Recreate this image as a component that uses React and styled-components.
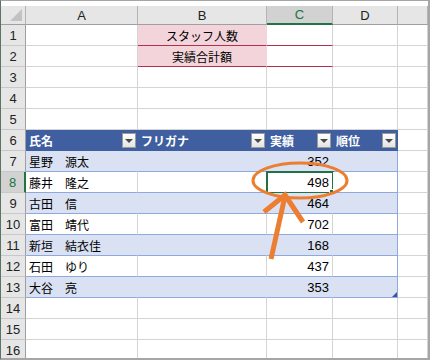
import React from 'react';
import styled, { createGlobalStyle, css } from 'styled-components';

const GRID = '#d4d4d4';
const HEAD_BG = '#e6e6e6';
const HEAD_LINE = '#b4b4b4';
const ACTIVE = '#217346';
const TABLE_HEAD = '#3f5fa0';
const BAND = '#d9e1f2';
const TABLE_LINE = '#8ea9db';
const PINK = '#f2d4da';
const MAROON = '#b0304f';
const ORANGE = '#ed7d31';

const GlobalStyle = createGlobalStyle`
  html, body {
    margin: 0;
    padding: 0;
    background: #ffffff;
  }
  body {
    font-family: "Liberation Sans", "Noto Sans CJK JP", sans-serif;
  }
`;

const Stage = styled.div`
  position: relative;
  width: 430px;
  height: 360px;
  overflow: hidden;
`;

const Frame = styled.div`
  box-sizing: border-box;
  width: 430px;
  height: 360px;
  padding-top: 5px;
  border-top: 1px solid #a6a6a6;
  border-left: 1px solid #5b7565;
  border-right: 2px solid #a6a6a6;
  border-bottom: 2px solid #a6a6a6;
  overflow: hidden;
  background: #ffffff;
`;

const Sheet = styled.div`
  display: grid;
  grid-template-columns: 25px 112px 129px 66px 65px 30px;
  grid-template-rows: 19px;
  grid-auto-rows: 21px;
`;

const Corner = styled.div`
  position: relative;
  background: ${HEAD_BG};
  border-right: 1px solid ${HEAD_LINE};
  border-bottom: 1px solid #9f9f9f;
  box-sizing: border-box;

  &::after {
    content: '';
    position: absolute;
    right: 3px;
    bottom: 3px;
    width: 0;
    height: 0;
    border-left: 12px solid transparent;
    border-bottom: 12px solid #c2c2c2;
  }
`;

const ColHead = styled.div`
  box-sizing: border-box;
  display: flex;
  align-items: center;
  justify-content: center;
  background: ${HEAD_BG};
  border-right: 1px solid ${HEAD_LINE};
  border-bottom: 1px solid #9f9f9f;
  font-size: 13px;
  color: #222;

  ${p =>
    p.$active &&
    css`
      background: #d2d2d2;
      color: ${ACTIVE};
      border-bottom: 2px solid ${ACTIVE};
    `}
`;

const RowHead = styled.div`
  box-sizing: border-box;
  display: flex;
  align-items: center;
  justify-content: center;
  background: ${HEAD_BG};
  border-right: 1px solid #9f9f9f;
  border-bottom: 1px solid #c8c8c8;
  font-size: 13px;
  color: #222;

  ${p =>
    p.$active &&
    css`
      background: #d2d2d2;
      color: ${ACTIVE};
      border-right: 2px solid ${ACTIVE};
    `}
`;

const Cell = styled.div`
  position: relative;
  box-sizing: border-box;
  display: flex;
  align-items: center;
  justify-content: ${p => p.$align || 'flex-start'};
  padding: 0 3px;
  background: ${p => p.$fill || '#ffffff'};
  border-right: 1px solid ${p => p.$side || GRID};
  border-bottom: 1px solid ${p => p.$under || GRID};
  font-family: ${p =>
    p.$cjk ? '"Noto Sans CJK JP", sans-serif' : '"Liberation Sans", sans-serif'};
  font-size: ${p => (p.$cjk ? '12px' : '13px')};
  font-weight: ${p => (p.$bold ? 700 : 400)};
  color: ${p => p.$color || '#000'};
  white-space: nowrap;
`;

const Label = styled.span`
  flex: 1;
  overflow: hidden;
`;

const Selection = styled.div`
  position: absolute;
  left: -1px;
  top: -1px;
  right: -2px;
  bottom: -2px;
  border: 2px solid ${ACTIVE};
  pointer-events: none;

  &::after {
    content: '';
    position: absolute;
    right: -4px;
    bottom: -4px;
    width: 5px;
    height: 5px;
    background: ${ACTIVE};
    border: 1px solid #ffffff;
  }
`;

const ResizeMark = styled.div`
  position: absolute;
  right: 0;
  bottom: 0;
  width: 0;
  height: 0;
  border-left: 5px solid transparent;
  border-bottom: 5px solid #3c52a8;
`;

const FilterButton = styled.div`
  box-sizing: border-box;
  width: 14px;
  height: 15px;
  margin-right: -2px;
  display: flex;
  align-items: center;
  justify-content: center;
  background: linear-gradient(#ffffff, #e4e4e4);
  border: 1px solid #9a9a9a;

  &::after {
    content: '';
    width: 0;
    height: 0;
    border-left: 4px solid transparent;
    border-right: 4px solid transparent;
    border-top: 4px solid #4a4a4a;
    margin-top: 1px;
  }
`;

const Overlay = styled.svg`
  position: absolute;
  left: 0;
  top: 0;
  pointer-events: none;
`;

const COLS = ['A', 'B', 'C', 'D', ''];

const TABLE_HEADERS = ['氏名', 'フリガナ', '実績', '順位'];

const STAFF = [
  ['星野　源太', 352],
  ['藤井　隆之', 498],
  ['古田　信', 464],
  ['富田　靖代', 702],
  ['新垣　結衣佳', 168],
  ['石田　ゆり', 437],
  ['大谷　亮', 353],
];

const SUMMARY = ['スタッフ人数', '実績合計額'];

function renderRow(n) {
  const cells = [];

  if (n <= 2) {
    cells.push(<Cell key="a" />);
    cells.push(
      <Cell key="b" $cjk $align="center" $fill={PINK} $side={PINK} $under={MAROON}>
        {SUMMARY[n - 1]}
      </Cell>,
    );
    cells.push(<Cell key="c" $under={MAROON} />);
    cells.push(<Cell key="d" />);
    cells.push(<Cell key="e" />);
    return cells;
  }

  if (n === 6) {
    TABLE_HEADERS.forEach((title, i) => {
      cells.push(
        <Cell key={i} $cjk $bold $color="#ffffff" $fill={TABLE_HEAD} $side={TABLE_HEAD} $under={TABLE_HEAD}>
          <Label>{title}</Label>
          <FilterButton />
        </Cell>,
      );
    });
    cells.push(<Cell key="e" />);
    return cells;
  }

  if (n >= 7 && n <= 13) {
    const [name, score] = STAFF[n - 7];
    const banded = n % 2 === 1;
    const fill = banded ? BAND : '#ffffff';
    const side = banded ? BAND : GRID;
    cells.push(
      <Cell key="a" $cjk $fill={fill} $side={side} $under={TABLE_LINE}>
        {name}
      </Cell>,
    );
    cells.push(<Cell key="b" $fill={fill} $side={side} $under={TABLE_LINE} />);
    cells.push(
      <Cell key="c" $align="flex-end" $fill={fill} $side={side} $under={TABLE_LINE}>
        {score}
        {n === 8 && <Selection />}
      </Cell>,
    );
    cells.push(
      <Cell key="d" $fill={fill} $side={TABLE_LINE} $under={TABLE_LINE}>
        {n === 13 && <ResizeMark />}
      </Cell>,
    );
    cells.push(<Cell key="e" />);
    return cells;
  }

  return COLS.map((c, i) => <Cell key={i} />);
}

export default function App() {
  const rows = Array.from({ length: 16 }, (_, i) => i + 1);

  return (
    <Stage>
      <GlobalStyle />
      <Frame>
        <Sheet>
          <Corner />
          {COLS.map((c, i) => (
            <ColHead key={i} $active={c === 'C'}>
              {c}
            </ColHead>
          ))}
          {rows.map(n => (
            <React.Fragment key={n}>
              <RowHead $active={n === 8}>{n}</RowHead>
              {renderRow(n)}
            </React.Fragment>
          ))}
        </Sheet>
      </Frame>

      {/* callout around the selected score */}
      <Overlay width="430" height="360" viewBox="0 0 430 360">
        <ellipse cx="300" cy="180.5" rx="47" ry="17.5" fill="none" stroke={ORANGE} strokeWidth="3" />
        <line x1="285" y1="196" x2="271" y2="259" stroke={ORANGE} strokeWidth="5" />
        <polyline
          points="264,212 285,195 303,222"
          fill="none"
          stroke={ORANGE}
          strokeWidth="5"
          strokeLinejoin="miter"
        />
      </Overlay>
    </Stage>
  );
}
